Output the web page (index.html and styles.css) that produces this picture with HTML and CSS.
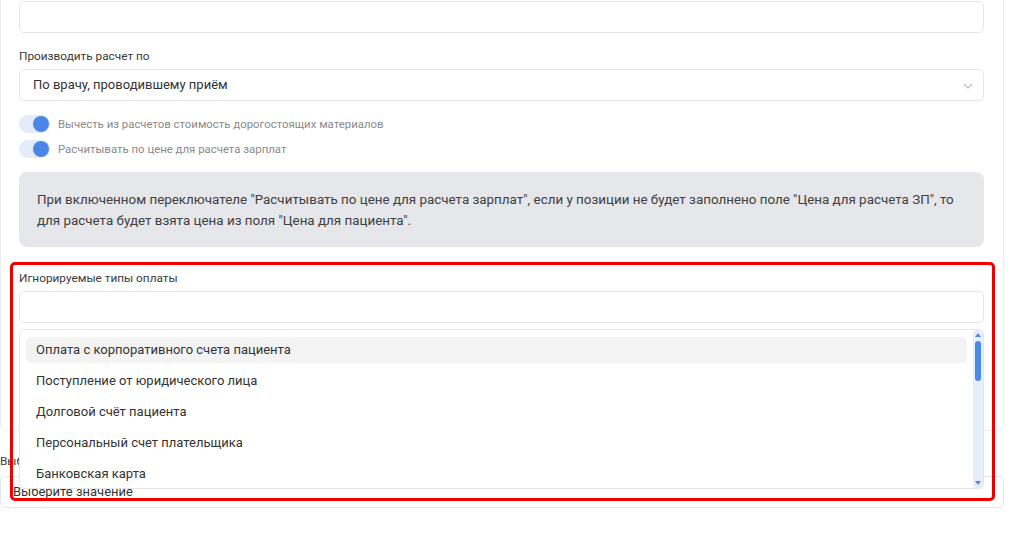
FILE: index.html
```html
<!DOCTYPE html>
<html lang="ru">
<head>
<meta charset="utf-8">
<link rel="stylesheet" href="styles.css">
</head>
<body>
<div class="page">
  <div class="panel">
    <div class="input top-input"></div>

    <div class="label lbl-calc">Производить расчет по</div>
    <div class="input select">
      <span class="value">По врачу, проводившему приём</span>
      <svg class="chevron" width="10" height="6" viewBox="0 0 10 6"><path d="M1 1 L5 5 L9 1" fill="none" stroke="#bcbcbc" stroke-width="1.1"/></svg>
    </div>

    <div class="toggles">
      <div class="toggle-row"><span class="toggle"><span class="knob"></span></span><span class="toggle-text">Вычесть из расчетов стоимость дорогостоящих материалов</span></div>
      <div class="toggle-row"><span class="toggle"><span class="knob"></span></span><span class="toggle-text">Расчитывать по цене для расчета зарплат</span></div>
    </div>

    <div class="info">При включенном переключателе "Расчитывать по цене для расчета зарплат", если у позиции не будет заполнено поле "Цена для расчета ЗП", то для расчета будет взята цена из поля "Цена для пациента".</div>

    <div class="label lbl-ignored">Игнорируемые типы оплаты</div>
    <div class="input"></div>
  </div>

  <div class="label lbl-bottom">Выберите кассу</div>
  <div class="input bottom-select"><span class="value">Выберите значение</span></div>

  <div class="dropdown">
    <div class="list">
      <div class="item active">Оплата с корпоративного счета пациента</div>
      <div class="item">Поступление от юридического лица</div>
      <div class="item">Долговой счёт пациента</div>
      <div class="item">Персональный счет плательщика</div>
      <div class="item">Банковская карта</div>
      <div class="item">Наличные</div>
    </div>
    <div class="scrollbar">
      <span class="arrow up"></span>
      <span class="thumb"></span>
      <span class="arrow down"></span>
    </div>
  </div>

  <div class="highlight"></div>
</div>
</body>
</html>
```

FILE: styles.css
```css
* { box-sizing: border-box; }
html, body { margin: 0; padding: 0; background: #fff; }
body {
  font-family: Roboto, "Noto Sans", "Liberation Sans", sans-serif;
  color: #333;
  width: 1024px;
  height: 538px;
  overflow: hidden;
}
.page { position: relative; width: 1024px; height: 538px; }

.panel {
  width: 1004px;
  border-left: 1px solid #ededed;
  border-right: 1px solid #ededed;
  border-bottom: 1px solid #ededed;
  border-bottom-left-radius: 6px;
  border-bottom-right-radius: 6px;
  padding: 1px 19px 107px 18px;
}

.input {
  height: 32px;
  border: 1px solid #e6e6e6;
  border-radius: 5px;
  background: #fff;
}

.label {
  font-size: 11.8px;
  line-height: 16px;
  color: #3a3a3a;
}
.lbl-calc { margin-top: 15px; margin-bottom: 5px; }
.lbl-ignored { margin-top: 23px; margin-bottom: 5px; }

.select {
  display: flex;
  align-items: center;
  justify-content: space-between;
  padding: 0 10px 0 13px;
}
.value { font-size: 13px; color: #333; line-height: 16px; }
.chevron { display: block; margin-top: 1px; }

.toggles {
  margin-top: 14px;
  display: flex;
  flex-direction: column;
  gap: 7px;
}
.toggle-row { display: flex; align-items: center; height: 18px; }
.toggle {
  position: relative;
  width: 31px;
  height: 18px;
  border-radius: 9px;
  background: #e4ecfa;
  flex: none;
}
.knob {
  position: absolute;
  right: 1px;
  top: 1px;
  width: 16px;
  height: 16px;
  border-radius: 50%;
  background: #4a86e8;
}
.toggle-text {
  margin-left: 8px;
  font-size: 11.4px;
  color: #8a8a8a;
}

.info {
  margin-top: 14px;
  height: 75px;
  background: #e5e7eb;
  border-radius: 8px;
  padding: 17px 18px 0 18px;
  font-size: 13.4px;
  line-height: 21px;
  color: #404040;
}

.lbl-bottom {
  margin-top: 22px;
  white-space: nowrap;
}
.bottom-select {
  width: 1004px;
  margin-top: 7px;
  display: flex;
  align-items: center;
  padding-left: 12px;
}

.dropdown {
  position: absolute;
  left: 19px;
  top: 329px;
  width: 965px;
  height: 160px;
  border: 1px solid #e6e6e6;
  border-radius: 5px;
  background: #fff;
  display: flex;
  overflow: hidden;
}
.list {
  flex: 1;
  padding: 7px 6px 0 6px;
  display: flex;
  flex-direction: column;
  gap: 5px;
}
.item {
  flex: none;
  height: 26px;
  line-height: 26px;
  padding-left: 10px;
  font-size: 13px;
  color: #333;
  border-radius: 5px;
}
.item.active { background: #f3f3f3; }

.scrollbar {
  position: relative;
  width: 10px;
  background: #e5eefc;
  border-radius: 3px;
}
.thumb {
  position: absolute;
  left: 2px;
  top: 11px;
  width: 6px;
  height: 40px;
  border-radius: 3px;
  background: #4d8ae8;
}
.arrow {
  position: absolute;
  left: 2px;
  width: 0;
  height: 0;
  border-left: 3px solid transparent;
  border-right: 3px solid transparent;
}
.arrow.up { top: 3px; border-bottom: 4px solid #4d8ae8; }
.arrow.down { bottom: 3px; border-top: 4px solid #4d8ae8; }

.highlight {
  position: absolute;
  left: 10px;
  top: 262px;
  width: 985px;
  height: 239px;
  border: 3px solid #ee0000;
  border-radius: 5px;
  pointer-events: none;
}
```
